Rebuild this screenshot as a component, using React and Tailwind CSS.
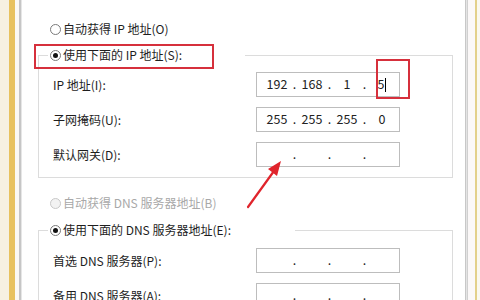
import React from "react";

const FONT = { fontFamily: '"Noto Sans CJK SC", "Noto Sans", sans-serif' };

function Radio({ checked, disabled }) {
  return (
    <span
      className={
        "w-[11px] h-[11px] rounded-full border flex items-center justify-center shrink-0 " +
        (disabled ? "border-[#c8c8c8] bg-[#f2f2f2]" : "border-[#7a7a7a] bg-white")
      }
    >
      {checked && <span className="w-[5px] h-[5px] rounded-full bg-[#111]" />}
    </span>
  );
}

function IpBox({ parts, caret }) {
  return (
    <div className="w-[144px] h-[25px] border border-[#bdbdbd] bg-white flex items-center pl-[6px] text-[12.5px] text-[#222] leading-none">
      {[0, 1, 2, 3].map((i) => (
        <React.Fragment key={i}>
          <span className="w-[28px] flex items-center justify-center">
            <span>{parts ? parts[i] : ""}</span>
            {caret && i === 3 && <span className="w-px h-[14px] bg-black ml-[1px]" />}
          </span>
          {i < 3 && <span className="w-[7px] text-center">.</span>}
        </React.Fragment>
      ))}
    </div>
  );
}

function Row({ label, children }) {
  return (
    <div className="flex items-center h-[25px]">
      <div className="w-[217px] pl-[14px] text-[12px] text-[#1e1e1e]">{label}</div>
      {children}
    </div>
  );
}

function GroupHeader({ width, children }) {
  return (
    <div className="flex h-[18px]">
      <div className="w-[10px] self-end h-[9px] border-t border-l border-[#dcdcdc]" />
      <div className="flex items-center pl-[2px] gap-[2px]" style={{ width }}>
        {children}
      </div>
      <div className="flex-1 self-end h-[9px] border-t border-r border-[#dcdcdc]" />
    </div>
  );
}

export default function App() {
  return (
    <div className="w-[480px] h-[300px] overflow-hidden relative flex bg-white" style={FONT}>
      <div className="w-[9px] bg-[#f7f1e1]" />
      <div className="w-[6px] bg-[#e8c25e]" />
      <div className="w-[4px] bg-[#fbf9f3]" />
      <div className="w-[2px] bg-[#c6c6c6]" />
      <div className="w-[1px] bg-[#e6e6e6]" />

      <div className="w-[443px] bg-white pl-[16px] pr-[12px] pt-[20px] flex flex-col">
        <div className="h-[18px] flex items-center pl-[12px] gap-[2px] text-[12px] text-[#1e1e1e]">
          <Radio />
          <span>自动获得 IP 地址(O)</span>
        </div>

        <div className="mt-[8px] flex flex-col">
          <GroupHeader width="197px">
            <Radio checked />
            <span className="text-[12px] text-[#1e1e1e]">使用下面的 IP 地址(S):</span>
          </GroupHeader>
          <div className="border-l border-r border-b border-[#dcdcdc] pt-[8px] pb-[10px] flex flex-col gap-[10px]">
            <Row label="IP 地址(I):">
              <IpBox parts={["192", "168", "1", "5"]} caret />
            </Row>
            <Row label="子网掩码(U):">
              <IpBox parts={["255", "255", "255", "0"]} />
            </Row>
            <Row label="默认网关(D):">
              <IpBox />
            </Row>
          </div>
        </div>

        <div className="mt-[16px] h-[18px] flex items-center pl-[12px] gap-[2px] text-[12px] text-[#a8a8a8]">
          <Radio disabled />
          <span>自动获得 DNS 服务器地址(B)</span>
        </div>

        <div className="mt-[9px] flex flex-col">
          <GroupHeader width="247px">
            <Radio checked />
            <span className="text-[12px] text-[#1e1e1e]">使用下面的 DNS 服务器地址(E):</span>
          </GroupHeader>
          <div className="border-l border-r border-b border-[#dcdcdc] pt-[9px] pb-[10px] flex flex-col gap-[10px]">
            <Row label="首选 DNS 服务器(P):">
              <IpBox />
            </Row>
            <Row label="备用 DNS 服务器(A):">
              <IpBox />
            </Row>
          </div>
        </div>
      </div>

      <div className="w-[1px] bg-[#c8c8c8]" />
      <div className="w-[1px] bg-[#e4e4e4]" />
      <div className="w-[1px] bg-[#d0d0d0]" />
      <div className="w-[7px] bg-[#fbf8f8]" />
      <div className="w-[2px] bg-[#e3d08a]" />
      <div className="w-[3px] bg-[#faf8f0]" />

      {/* annotations */}
      <div className="absolute left-[34px] top-[44px] w-[180px] h-[25px] border-2 border-[#d6303c]" />
      <div className="absolute left-[376px] top-[59px] w-[34px] h-[40px] border-2 border-[#d6303c]" />
      <svg className="absolute left-0 top-0" width="480" height="300" viewBox="0 0 480 300">
        <line x1="248" y1="207" x2="274" y2="171" stroke="#e0242c" strokeWidth="2.2" strokeLinecap="round" />
        <polygon points="281,161 268,169 277,176" fill="#e0242c" />
      </svg>
    </div>
  );
}
